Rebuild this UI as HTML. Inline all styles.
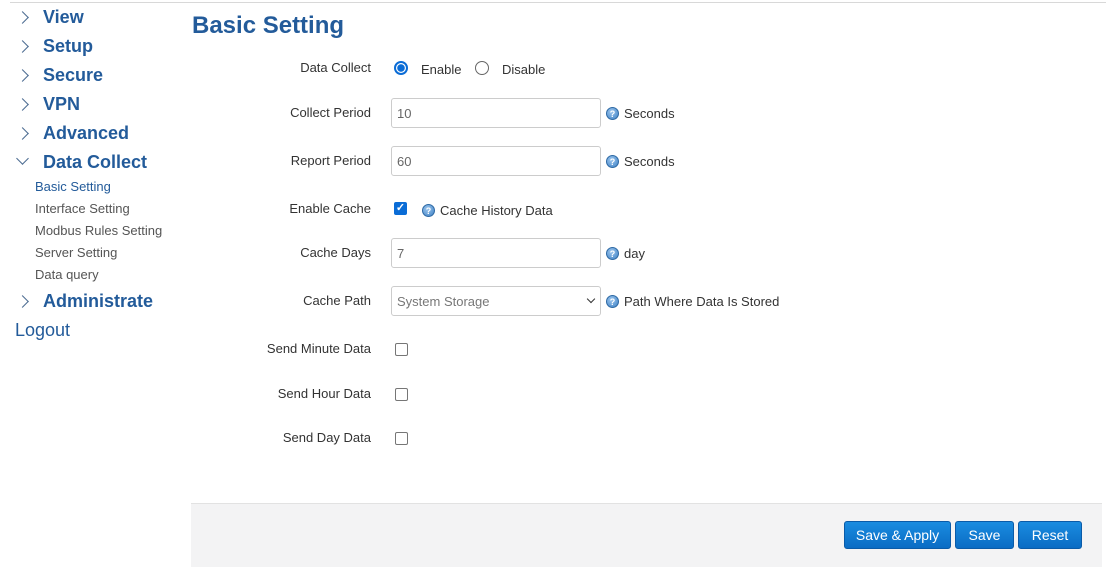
<!DOCTYPE html>
<html><head><meta charset="utf-8"><style>
*{margin:0;padding:0;box-sizing:border-box}
body{width:1106px;height:573px;background:#fff;font-family:"Liberation Sans",Arial,sans-serif;position:relative;overflow:hidden;color:#333}
.a{position:absolute}
.top{left:10px;top:2px;width:1096px;height:1px;background:#d8d8d8}
.nav{left:43px;font-size:18px;font-weight:bold;color:#235b9a;line-height:22px}
.chev{left:18px;width:9px;height:9px;border-right:1px solid #4a6a90;border-top:1px solid #4a6a90;transform:rotate(45deg)}
.sub{left:35px;font-size:13px;color:#555;line-height:16px}
h1{position:absolute;left:192px;top:12px;font-size:24px;color:#235b9a;font-weight:bold}
.lbl{font-size:13px;color:#333;right:735px;text-align:right;white-space:nowrap}
.inp{left:391px;width:210px;height:30px;border:1px solid #ccc;border-radius:3px;font-size:13px;color:#666;padding:7px 5px}
.t{font-size:13px;color:#333;white-space:nowrap}
.q{width:13px;height:13px;border-radius:50%;background:radial-gradient(circle at 40% 35%,#9cc6ee,#3d80c4);color:#fff;font-size:9px;font-weight:bold;text-align:center;line-height:13px;border:1px solid #2f6aa5}
.cb{width:13px;height:13px;border:1px solid #767676;border-radius:2px;background:#fff}
.foot{left:191px;top:503px;width:911px;height:64px;background:#f3f3f4;border-top:1px solid #e2e2e2}
.btn{top:521px;height:28px;border-radius:3px;background:linear-gradient(#1a8ce0,#0a6cc4);border:1px solid #0a5ba8;color:#fff;font-size:14px;text-align:center;line-height:26px}
</style></head><body>
<div class="a top"></div>
<div class="a chev" style="top:13px"></div><div class="a nav" style="top:6px">View</div>
<div class="a chev" style="top:42px"></div><div class="a nav" style="top:35px">Setup</div>
<div class="a chev" style="top:71px"></div><div class="a nav" style="top:64px">Secure</div>
<div class="a chev" style="top:100px"></div><div class="a nav" style="top:93px">VPN</div>
<div class="a chev" style="top:129px"></div><div class="a nav" style="top:122px">Advanced</div>
<div class="a chev" style="top:154px;transform:rotate(135deg)"></div><div class="a nav" style="top:151px">Data Collect</div>
<div class="a sub" style="top:179px;color:#235b9a">Basic Setting</div>
<div class="a sub" style="top:201px">Interface Setting</div>
<div class="a sub" style="top:223px">Modbus Rules Setting</div>
<div class="a sub" style="top:245px">Server Setting</div>
<div class="a sub" style="top:267px">Data query</div>
<div class="a chev" style="top:297px"></div><div class="a nav" style="top:290px">Administrate</div>
<div class="a" style="left:15px;top:320px;font-size:18px;color:#235b9a">Logout</div>
<h1>Basic Setting</h1>

<div class="a lbl" style="top:60px">Data Collect</div>
<div class="a" style="left:394px;top:61px;width:14px;height:14px;border-radius:50%;border:2px solid #0a6cd6;background:radial-gradient(#0a6cd6 3.5px,#fff 4px)"></div>
<div class="a t" style="left:421px;top:62px">Enable</div>
<div class="a" style="left:475px;top:61px;width:14px;height:14px;border-radius:50%;border:1px solid #666"></div>
<div class="a t" style="left:502px;top:62px">Disable</div>

<div class="a lbl" style="top:105px">Collect Period</div>
<div class="a inp" style="top:98px">10</div>
<div class="a q" style="left:606px;top:107px">?</div><div class="a t" style="left:624px;top:106px">Seconds</div>

<div class="a lbl" style="top:153px">Report Period</div>
<div class="a inp" style="top:146px">60</div>
<div class="a q" style="left:606px;top:155px">?</div><div class="a t" style="left:624px;top:154px">Seconds</div>

<div class="a lbl" style="top:201px">Enable Cache</div>
<div class="a" style="left:394px;top:202px;width:13px;height:13px;border-radius:2px;background:#0a6cd6;color:#fff;font-size:11px;line-height:13px;text-align:center;font-weight:bold">✓</div>
<div class="a q" style="left:422px;top:204px">?</div><div class="a t" style="left:440px;top:203px">Cache History Data</div>

<div class="a lbl" style="top:245px">Cache Days</div>
<div class="a inp" style="top:238px">7</div>
<div class="a q" style="left:606px;top:247px">?</div><div class="a t" style="left:624px;top:246px">day</div>

<div class="a lbl" style="top:293px">Cache Path</div>
<div class="a inp" style="top:286px;color:#777">System Storage</div>
<div class="a" style="left:588px;top:296px;width:6px;height:6px;border-right:1.5px solid #333;border-bottom:1.5px solid #333;transform:rotate(45deg)"></div>
<div class="a q" style="left:606px;top:295px">?</div><div class="a t" style="left:624px;top:294px">Path Where Data Is Stored</div>

<div class="a lbl" style="top:341px">Send Minute Data</div><div class="a cb" style="left:395px;top:343px"></div>
<div class="a lbl" style="top:386px">Send Hour Data</div><div class="a cb" style="left:395px;top:388px"></div>
<div class="a lbl" style="top:430px">Send Day Data</div><div class="a cb" style="left:395px;top:432px"></div>

<div class="a foot"></div>
<div class="a btn" style="left:844px;width:107px">Save &amp; Apply</div>
<div class="a btn" style="left:955px;width:59px">Save</div>
<div class="a btn" style="left:1018px;width:64px">Reset</div>
</body></html>
